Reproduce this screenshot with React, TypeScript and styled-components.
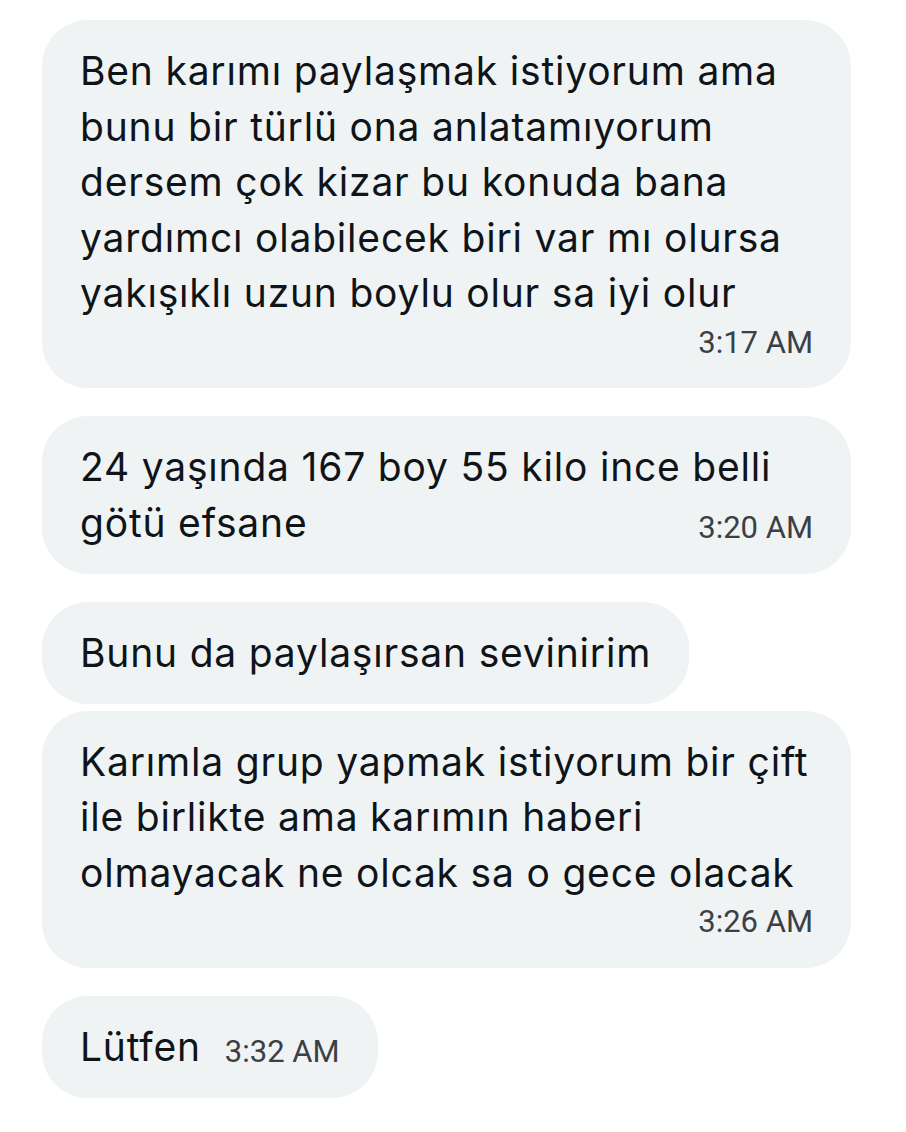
import React, { FC } from "react";
import styled, { createGlobalStyle } from "styled-components";

const GlobalStyle = createGlobalStyle`
  html, body {
    margin: 0;
    padding: 0;
    background: #ffffff;
  }
  body {
    font-family: Inter, "Noto Sans", "Liberation Sans", sans-serif;
    -webkit-font-smoothing: antialiased;
  }
`;

const Thread = styled.div`
  width: 906px;
  min-height: 1132px;
  box-sizing: border-box;
  padding: 20px 55px 0 42px;
  display: flex;
  flex-direction: column;
  align-items: flex-start;
`;

const Bubble = styled.div<{ $fit?: boolean; $grouped?: boolean }>`
  box-sizing: border-box;
  width: ${(p) => (p.$fit ? "auto" : "809px")};
  margin-top: ${(p) => (p.$grouped ? "7px" : "28px")};
  padding: 23px 38px 23.5px;
  background: #eff3f4;
  border-radius: 46px;
  color: #0f1419;
  font-size: 39px;
  letter-spacing: 0.8px;
  line-height: 55.5px;

  &:first-child {
    margin-top: 0;
  }
`;

const Line = styled.div`
  white-space: pre;
`;

const LastLine = styled.div`
  display: flex;
  flex-wrap: wrap;
  align-items: flex-end;
  column-gap: 24px;
`;

const Stamp = styled.span`
  margin-left: auto;
  font-family: Roboto, "Liberation Sans", sans-serif;
  font-size: 31px;
  letter-spacing: 0;
  line-height: 44px;
  color: #3a4045;
  white-space: nowrap;
`;

interface Message {
  text: string;
  time?: string;
  fit?: boolean;
  grouped?: boolean;
}

const messages: Message[] = [
  {
    text:
      "Ben karımı paylaşmak istiyorum ama\nbunu bir türlü ona anlatamıyorum\ndersem çok kizar bu konuda bana\nyardımcı olabilecek biri var mı olursa\nyakışıklı uzun boylu olur sa iyi olur",
    time: "3:17 AM",
  },
  { text: "24 yaşında 167 boy 55 kilo ince belli\ngötü efsane", time: "3:20 AM" },
  { text: "Bunu da paylaşırsan sevinirim", fit: true },
  {
    text:
      "Karımla grup yapmak istiyorum bir çift\nile birlikte ama karımın haberi\nolmayacak ne olcak sa o gece olacak",
    time: "3:26 AM",
    grouped: true,
  },
  { text: "Lütfen", time: "3:32 AM", fit: true },
];

const ChatBubble: FC<{ msg: Message }> = ({ msg }) => {
  const lines = msg.text.split("\n");
  const last = lines.pop();
  return (
    <Bubble $fit={msg.fit} $grouped={msg.grouped}>
      {lines.map((l, i) => (
        <Line key={i}>{l}</Line>
      ))}
      <LastLine>
        <Line>{last}</Line>
        {msg.time && <Stamp>{msg.time}</Stamp>}
      </LastLine>
    </Bubble>
  );
};

const App: FC = () => (
  <>
    <GlobalStyle />
    <Thread>
      {messages.map((m, i) => (
        <ChatBubble key={i} msg={m} />
      ))}
    </Thread>
  </>
);

export default App;
